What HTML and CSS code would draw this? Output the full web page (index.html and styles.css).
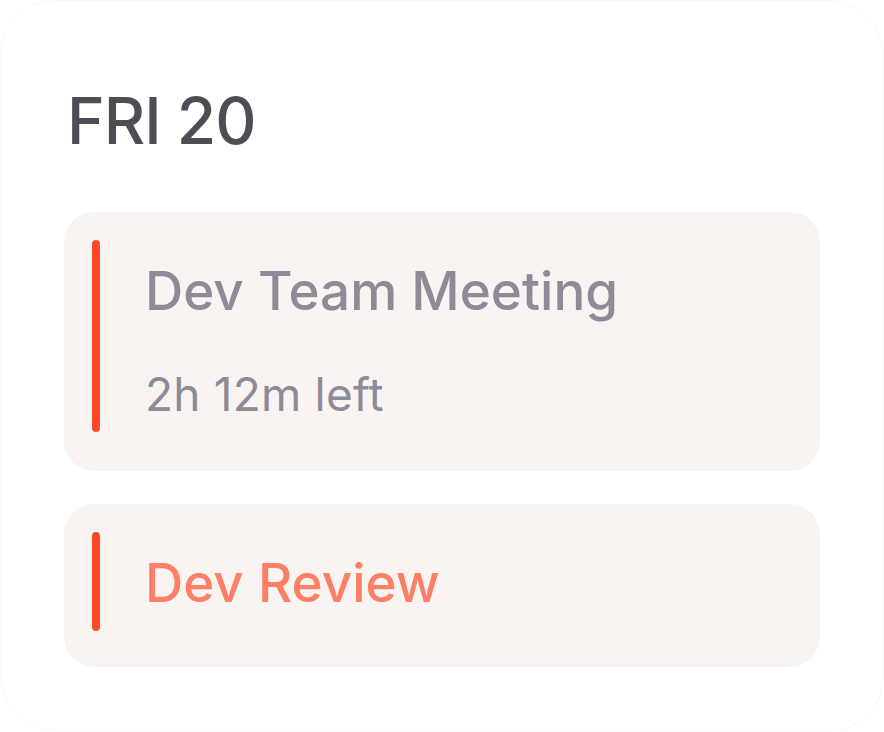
FILE: index.html
```html
<!DOCTYPE html>
<html>
<head>
<meta charset="utf-8">
<link rel="stylesheet" href="styles.css">
</head>
<body>
<div class="panel">
  <h1 class="day">FRI 20</h1>
  <div class="event">
    <div class="bar"></div>
    <div class="info">
      <div class="title">Dev Team Meeting</div>
      <div class="meta">2h 12m left</div>
    </div>
  </div>
  <div class="event">
    <div class="bar"></div>
    <div class="info">
      <div class="title accent">Dev Review</div>
    </div>
  </div>
</div>
</body>
</html>
```
FILE: styles.css
```css
html, body { margin: 0; padding: 0; background: #ffffff; }
body { font-family: Inter, "Noto Sans", sans-serif; }
.panel {
  box-sizing: border-box;
  width: 884px;
  height: 732px;
  border: 1px solid #f8f8f8;
  border-radius: 56px;
  padding: 82px 63px 0 63px;
  display: flex;
  flex-direction: column;
  gap: 33px;
}
.day {
  margin: 0 0 20px 3px;
  font-size: 64px;
  font-weight: 500;
  line-height: 76px;
  color: #4e4d56;
  letter-spacing: -1px;
}
.event {
  background: #f9f4f2;
  border-radius: 30px;
  display: flex;
  gap: 45px;
  padding: 28px 28px 39px 28px;
}
.event + .event { padding-bottom: 36px; }
.bar {
  width: 8px;
  border-radius: 4px;
  background: #fb4a25;
  flex: none;
}
.info {
  display: flex;
  flex-direction: column;
  gap: 49px;
  padding: 19px 0 16px;
}
.title {
  font-size: 53px;
  font-weight: 500;
  line-height: 64px;
  color: #8e8a97;
  letter-spacing: 0;
}
.title.accent { color: #fc7f66; }
.meta {
  font-size: 46px;
  font-weight: 400;
  line-height: 44px;
  color: #8e8a97;
  letter-spacing: 0.2px;
}
```
